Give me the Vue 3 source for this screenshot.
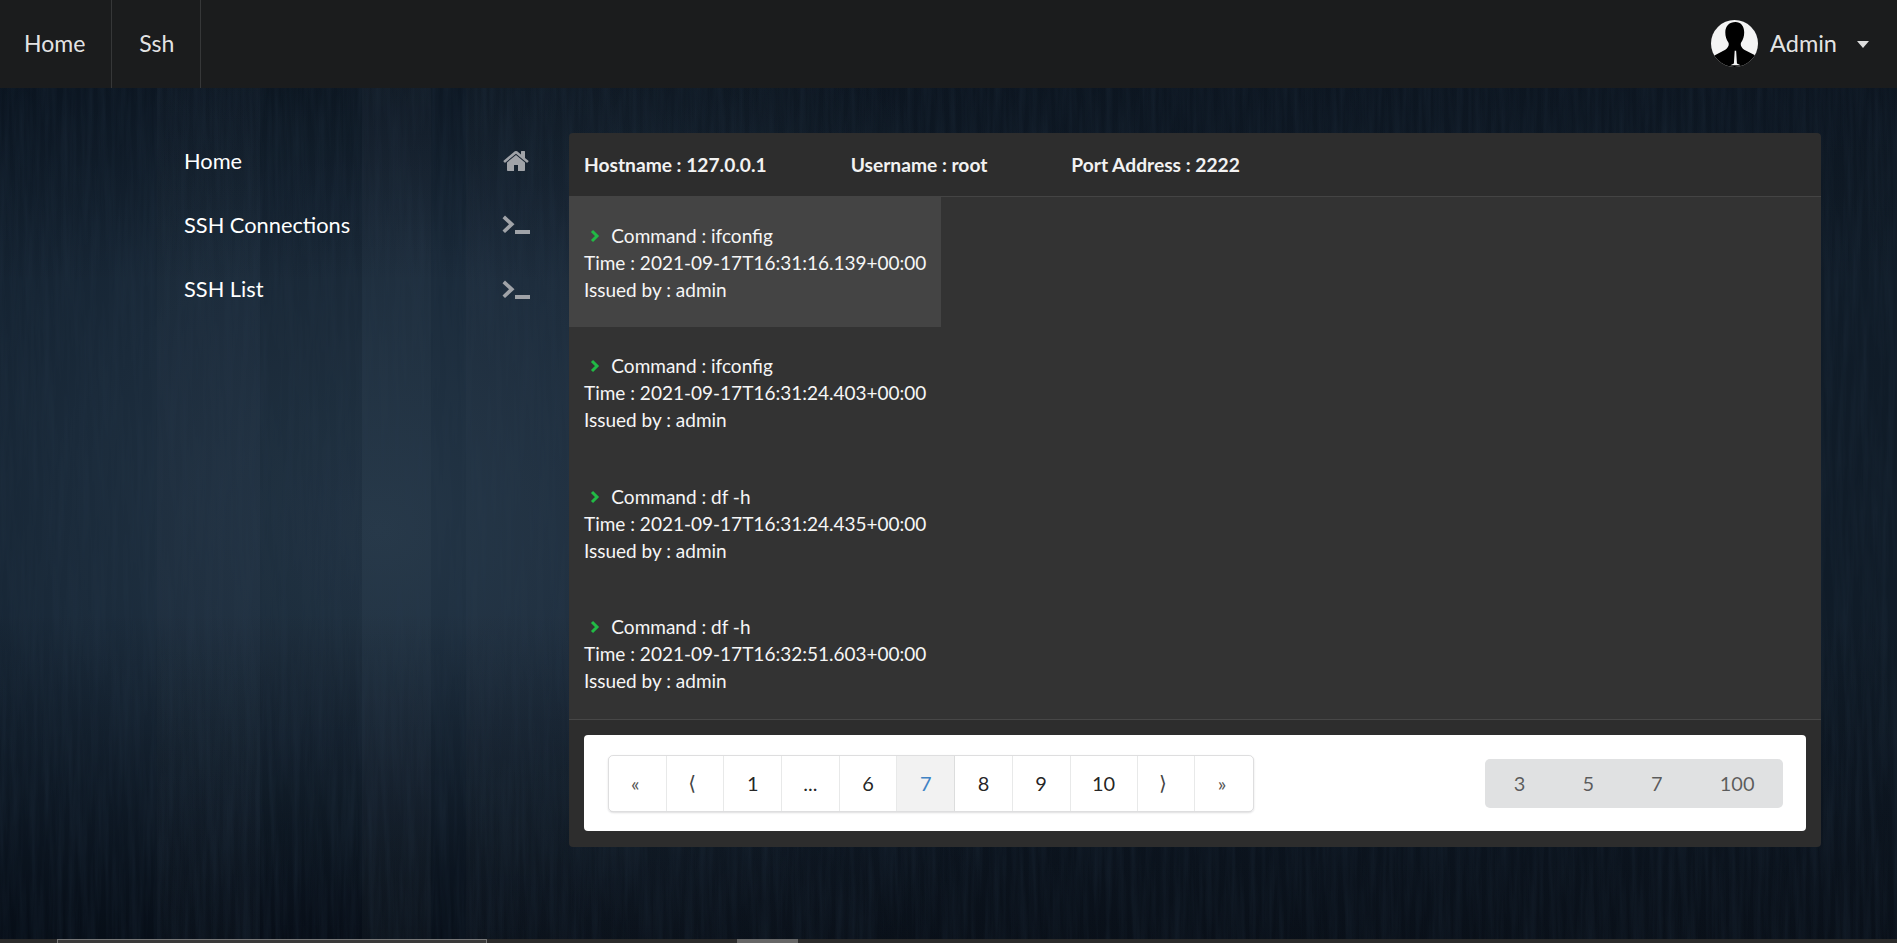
<template>
  <div class="page">
    <svg class="grain" width="100%" height="100%" aria-hidden="true">
      <filter id="wood" x="0" y="0" width="100%" height="100%">
        <feTurbulence type="fractalNoise" baseFrequency="0.16 0.009" numOctaves="4" seed="7" />
        <feColorMatrix values="0 0 0 0 0.02  0 0 0 0 0.04  0 0 0 0 0.07  0.45 0 0 0 -0.16" />
      </filter>
      <rect width="100%" height="100%" filter="url(#wood)" />
    </svg>

    <header class="topbar">
      <a v-for="link in topLinks" :key="link" class="top-link">{{ link }}</a>
      <div class="user">
        <svg class="avatar" viewBox="0 0 46 46">
          <defs>
            <clipPath id="round"><circle cx="23" cy="23" r="23" /></clipPath>
            <filter id="soft"><feGaussianBlur stdDeviation="0.6" /></filter>
          </defs>
          <g clip-path="url(#round)">
            <rect width="46" height="46" fill="#f4f4f4" />
            <g filter="url(#soft)">
              <path d="M24 2c5 0 8.500 4 8.500 10 0 4-1 7-3 10-1 2 0 5 3 7l13.500 7v12H1V36l13-7c3-2 4-5 3-7-2-3-3-6-3-10 0-6 4-10 10-10z" fill="#000" />
              <path d="M23.200 30l1.400 0 .8 12.500 3.600 1.700H19l3.400-1.700z" fill="#f4f4f4" />
            </g>
          </g>
        </svg>
        <span class="user-name">Admin</span>
        <i class="caret"></i>
      </div>
    </header>

    <main class="content">
      <nav class="side">
        <a v-for="item in sideLinks" :key="item.label" class="side-link">
          <span class="side-label">{{ item.label }}</span>
          <svg class="side-icon" :viewBox="item.box">
            <path :d="item.icon" />
          </svg>
        </a>
      </nav>

      <section class="panel">
        <div class="panel-head">
          <span>Hostname : 127.0.0.1</span>
          <span>Username : root</span>
          <span>Port Address : 2222</span>
        </div>
        <div class="panel-body">
          <div
            v-for="(log, i) in logs"
            :key="log.time"
            class="log"
            :class="{ selected: i === 0 }"
          >
            <div class="log-command">
              <svg class="chevron" viewBox="0 0 10 14">
                <path d="M2 2l5 5-5 5" />
              </svg>
              Command : {{ log.command }}
            </div>
            <div>Time : {{ log.time }}</div>
            <div>Issued by : admin</div>
          </div>
        </div>
        <div class="panel-foot">
          <div class="foot-box">
            <div class="pages">
              <a
                v-for="p in pages"
                :key="p.key"
                class="page-cell"
                :class="[p.cls, { current: p.label === '7' }]"
              >{{ p.label }}</a>
            </div>
            <div class="sizes">
              <button v-for="n in sizes" :key="n" type="button">{{ n }}</button>
            </div>
          </div>
        </div>
      </section>
    </main>

    <div class="scroller">
      <span class="thumb"></span>
      <span class="thumb-small"></span>
    </div>
  </div>
</template>

<script setup>
const homeIcon = 'M1472 992v480q0 26-19 45t-45 19h-384v-384H768v384H384q-26 0-45-19t-19-45V992q0-1 .5-3t.5-3l575-474 575 474q1 2 1 6zm223-69l-62 74q-8 9-21 11h-3q-13 0-21-7L896 424 204 1001q-12 8-24 7-13-2-21-11l-62-74q-8-10-7-23.500t11-21.500l719-599q32-26 76-26t76 26l244 204V288q0-14 9-23t23-9h192q14 0 23 9t9 23v408l219 182q10 8 11 21.500t-7 23.500z'
const terminalIcon = 'M3 4.500l9.500 8.800-9.500 8.800-2.500-2.700 6.500-6.100-6.500-6.100z M13 19h15v4H13z'

const topLinks = ['Home', 'Ssh']

const sideLinks = [
  { label: 'Home', icon: homeIcon, box: '0 0 1792 1792' },
  { label: 'SSH Connections', icon: terminalIcon, box: '0 0 28 28' },
  { label: 'SSH List', icon: terminalIcon, box: '0 0 28 28' }
]

const logs = [
  { command: 'ifconfig', time: '2021-09-17T16:31:16.139+00:00' },
  { command: 'ifconfig', time: '2021-09-17T16:31:24.403+00:00' },
  { command: 'df -h', time: '2021-09-17T16:31:24.435+00:00' },
  { command: 'df -h', time: '2021-09-17T16:32:51.603+00:00' }
]

const pages = [
  { key: 'first', label: '«', cls: 'small' },
  { key: 'prev', label: '⟨', cls: 'arrow' },
  { key: '1', label: '1' },
  { key: 'dots', label: '...' },
  { key: '6', label: '6' },
  { key: '7', label: '7' },
  { key: '8', label: '8' },
  { key: '9', label: '9' },
  { key: '10', label: '10', cls: 'wide' },
  { key: 'next', label: '⟩', cls: 'arrow' },
  { key: 'last', label: '»', cls: 'small' }
]

const sizes = [3, 5, 7, 100]
</script>

<style>
html,
body {
  margin: 0;
  background: #07101c;
}
</style>

<style scoped>
.page {
  position: relative;
  height: 100vh;
  overflow: hidden;
  display: flex;
  flex-direction: column;
  font-family: Lato, "Liberation Sans", sans-serif;
  color: #fff;
  background:
    linear-gradient(to right, transparent 157px, rgba(255, 255, 255, .012) 157px, rgba(255, 255, 255, .012) 260px, rgba(0, 0, 0, .05) 260px, rgba(0, 0, 0, .05) 362px, rgba(255, 255, 255, .02) 362px, rgba(255, 255, 255, .02) 431px, transparent 431px, transparent 466px, rgba(255, 255, 255, .015) 466px),
    linear-gradient(to bottom, rgba(3, 8, 16, .55) 0, transparent 30%, transparent 65%, rgba(3, 8, 16, .75) 100%),
    radial-gradient(ellipse 720px 620px at 380px 530px, #233546 0, #1a2a3a 45%, #0c1825 100%);
}

.grain {
  position: absolute;
  inset: 0;
}

.topbar {
  position: relative;
  flex: none;
  height: 88px;
  display: flex;
  align-items: stretch;
  background: #1b1c1d;
}

.top-link {
  display: flex;
  align-items: center;
  padding: 0 26px 2px 27px;
  font-size: 23px;
  color: rgba(255, 255, 255, .9);
  border-right: 1px solid rgba(255, 255, 255, .12);
}

.top-link:first-child {
  padding-left: 24px;
}

.user {
  margin-left: auto;
  display: flex;
  align-items: center;
  padding-right: 28px;
}

.avatar {
  width: 47px;
  height: 47px;
  margin: 0 12px 2px 0;
}

.user-name {
  padding-bottom: 2px;
  font-size: 23.500px;
  color: rgba(255, 255, 255, .9);
}

.caret {
  margin-left: 20px;
  border-style: solid;
  border-width: 7px 6px 0;
  border-color: rgba(255, 255, 255, .85) transparent transparent;
}

.content {
  position: relative;
  flex: 1;
  display: flex;
  align-items: flex-start;
  padding: 45px 0 0 184px;
}

.side {
  width: 346px;
  margin-right: 39px;
  margin-top: -4px;
}

.side-link {
  height: 64.300px;
  display: flex;
  align-items: center;
  justify-content: space-between;
  font-size: 21.800px;
}

.side-label {
  padding-bottom: 2px;
}

.side-icon {
  width: 28px;
  height: 28px;
  fill: #a0a3a8;
}

.panel {
  width: 1252px;
  border-radius: 4px;
  overflow: hidden;
  background: #2d2d2d;
}

.panel-head {
  height: 63px;
  display: flex;
  align-items: center;
  gap: 84px;
  padding-left: 15px;
  font-size: 19.200px;
  font-weight: 700;
  color: #f2f2f2;
  border-bottom: 1px solid #444;
}

.panel-body {
  height: 522px;
  background: #333;
  border-bottom: 1px solid #474747;
  font-size: 19px;
  line-height: 27px;
}

.log {
  width: fit-content;
  height: 130.400px;
  box-sizing: border-box;
  padding: 25px 15px 0;
  color: #f6f6f6;
}

.log.selected {
  background: #444;
}

.chevron {
  width: 10px;
  height: 14px;
  margin: 0 6.500px 0 6px;
  fill: none;
  stroke: #21ba45;
  stroke-width: 3;
}

.panel-foot {
  padding: 15px;
}

.foot-box {
  height: 96px;
  display: flex;
  align-items: center;
  justify-content: space-between;
  padding: 0 23px 0 24px;
  background: #fff;
  border-radius: 4px;
  margin-bottom: 1px;
}

.pages {
  display: flex;
  height: 57px;
  box-sizing: border-box;
  border: 1px solid rgba(34, 36, 38, .15);
  border-radius: 5px;
  box-shadow: 0 1px 2px rgba(34, 36, 38, .15);
}

.page-cell {
  box-sizing: border-box;
  width: 57.700px;
  display: flex;
  align-items: center;
  justify-content: center;
  font-size: 20px;
  color: rgba(0, 0, 0, .87);
  border-right: 1px solid rgba(34, 36, 38, .1);
}

.page-cell:last-child {
  border-right: 0;
}

.page-cell.wide {
  width: 67px;
}

.page-cell.small {
  padding-right: 4px;
  font-size: 20px;
  color: #555;
}

.page-cell.arrow {
  padding-right: 6px;
  font-family: "DejaVu Sans", sans-serif;
  font-size: 20px;
  color: #444;
}

.page-cell.current {
  background: #f2f2f2;
  color: #4183c4;
}

.sizes {
  display: flex;
  height: 49px;
  border-radius: 5px;
  overflow: hidden;
  background: #e0e1e2;
}

.sizes button {
  border: 0;
  background: none;
  padding: 0 28.500px;
  font-family: inherit;
  font-size: 20px;
  color: rgba(0, 0, 0, .6);
}

.scroller {
  position: absolute;
  left: 0;
  right: 0;
  bottom: 0;
  height: 4px;
  background: #2b2b2b;
}

.thumb {
  position: absolute;
  left: 57px;
  width: 430px;
  top: 0;
  bottom: 0;
  box-sizing: border-box;
  border: 1px solid #777;
  border-bottom: 0;
  background: #3a3a3a;
}

.thumb-small {
  position: absolute;
  left: 737px;
  width: 61px;
  top: 0;
  bottom: 0;
  background: #666;
}
</style>
